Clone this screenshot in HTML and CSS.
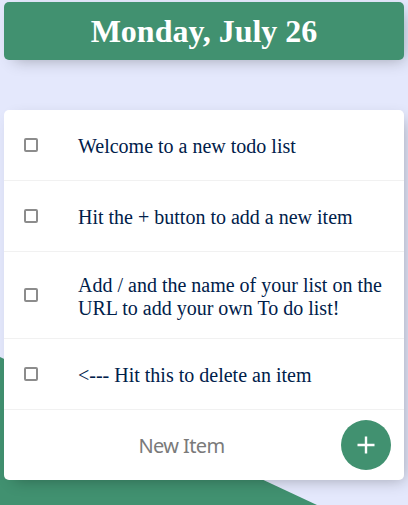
FILE: index.html
```html
<!DOCTYPE html>
<html lang="en">
<head>
<meta charset="utf-8">
<title>To do list</title>
<link rel="stylesheet" href="styles.css">
</head>
<body>
<header class="box heading"><h1>Monday, July 26</h1></header>
<main class="box list">
<label class="item"><input type="checkbox"><p>Welcome to a new todo list</p></label>
<label class="item"><input type="checkbox"><p>Hit the + button to add a new item</p></label>
<label class="item"><input type="checkbox"><p>Add / and the name of your list on the URL to add your own To do list!</p></label>
<label class="item"><input type="checkbox"><p>&lt;--- Hit this to delete an item</p></label>
<form class="new-item"><input type="text" placeholder="New Item" autocomplete="off"><button type="button" aria-label="Add"><svg viewBox="0 0 18 18"><path d="M9 .5v17M.5 9h17"/></svg></button></form>
</main>
</body>
</html>
```

FILE: styles.css
```css
* { box-sizing: border-box; }
html { height: 100%; overflow: hidden; background: #e4e8fc; }
body {
  margin: 0;
  padding: 2px 4px 0;
  height: 505px;
  overflow: hidden;
  font-family: "Liberation Serif", serif;
}
body::before {
  content: "";
  position: absolute;
  z-index: -1;
  inset: 0;
  background: #419170;
  clip-path: polygon(0 357px, 317px 505px, 0 505px);
}
.box { border-radius: 5px; box-shadow: 5px 5px 15px -5px rgba(0,0,0,.3); }
.heading { height: 58px; padding-top: 1px; background: #419170; display: flex; align-items: center; justify-content: center; }
h1 { margin: 0; color: #fff; font-size: 32px; line-height: 37px; }
.list { margin-top: 50px; background: #fff; height: 370px; }
.item { display: flex; align-items: center; min-height: 71px; border-bottom: 1px solid #f1f1f1; }
.item:nth-child(3) { min-height: 87px; }
.item input { appearance: none; width: 14px; height: 14px; border: 2px solid #8c8c8c; border-radius: 2px; background: #fff; margin: 0 40px 0 20px; flex: none; }
.item p { margin: 0; padding-top: 3px; color: #00204a; font-size: 20px; line-height: 23px; }
.new-item { display: flex; height: 70px; align-items: center; }
.new-item input { width: 337px; height: 60px; border: 0; padding: 0 0 0 18px; background: transparent; text-align: center; font: 20px "Noto Sans", sans-serif; letter-spacing: -.6px; outline: 0; }
.new-item input::placeholder { color: #7a7a7a; }
.new-item button { width: 50px; height: 50px; padding: 0; border: 0; border-radius: 50%; background: #419170; display: grid; place-items: center; }
svg { width: 18px; height: 18px; fill: none; stroke: #fff; stroke-width: 2.4; }
```
